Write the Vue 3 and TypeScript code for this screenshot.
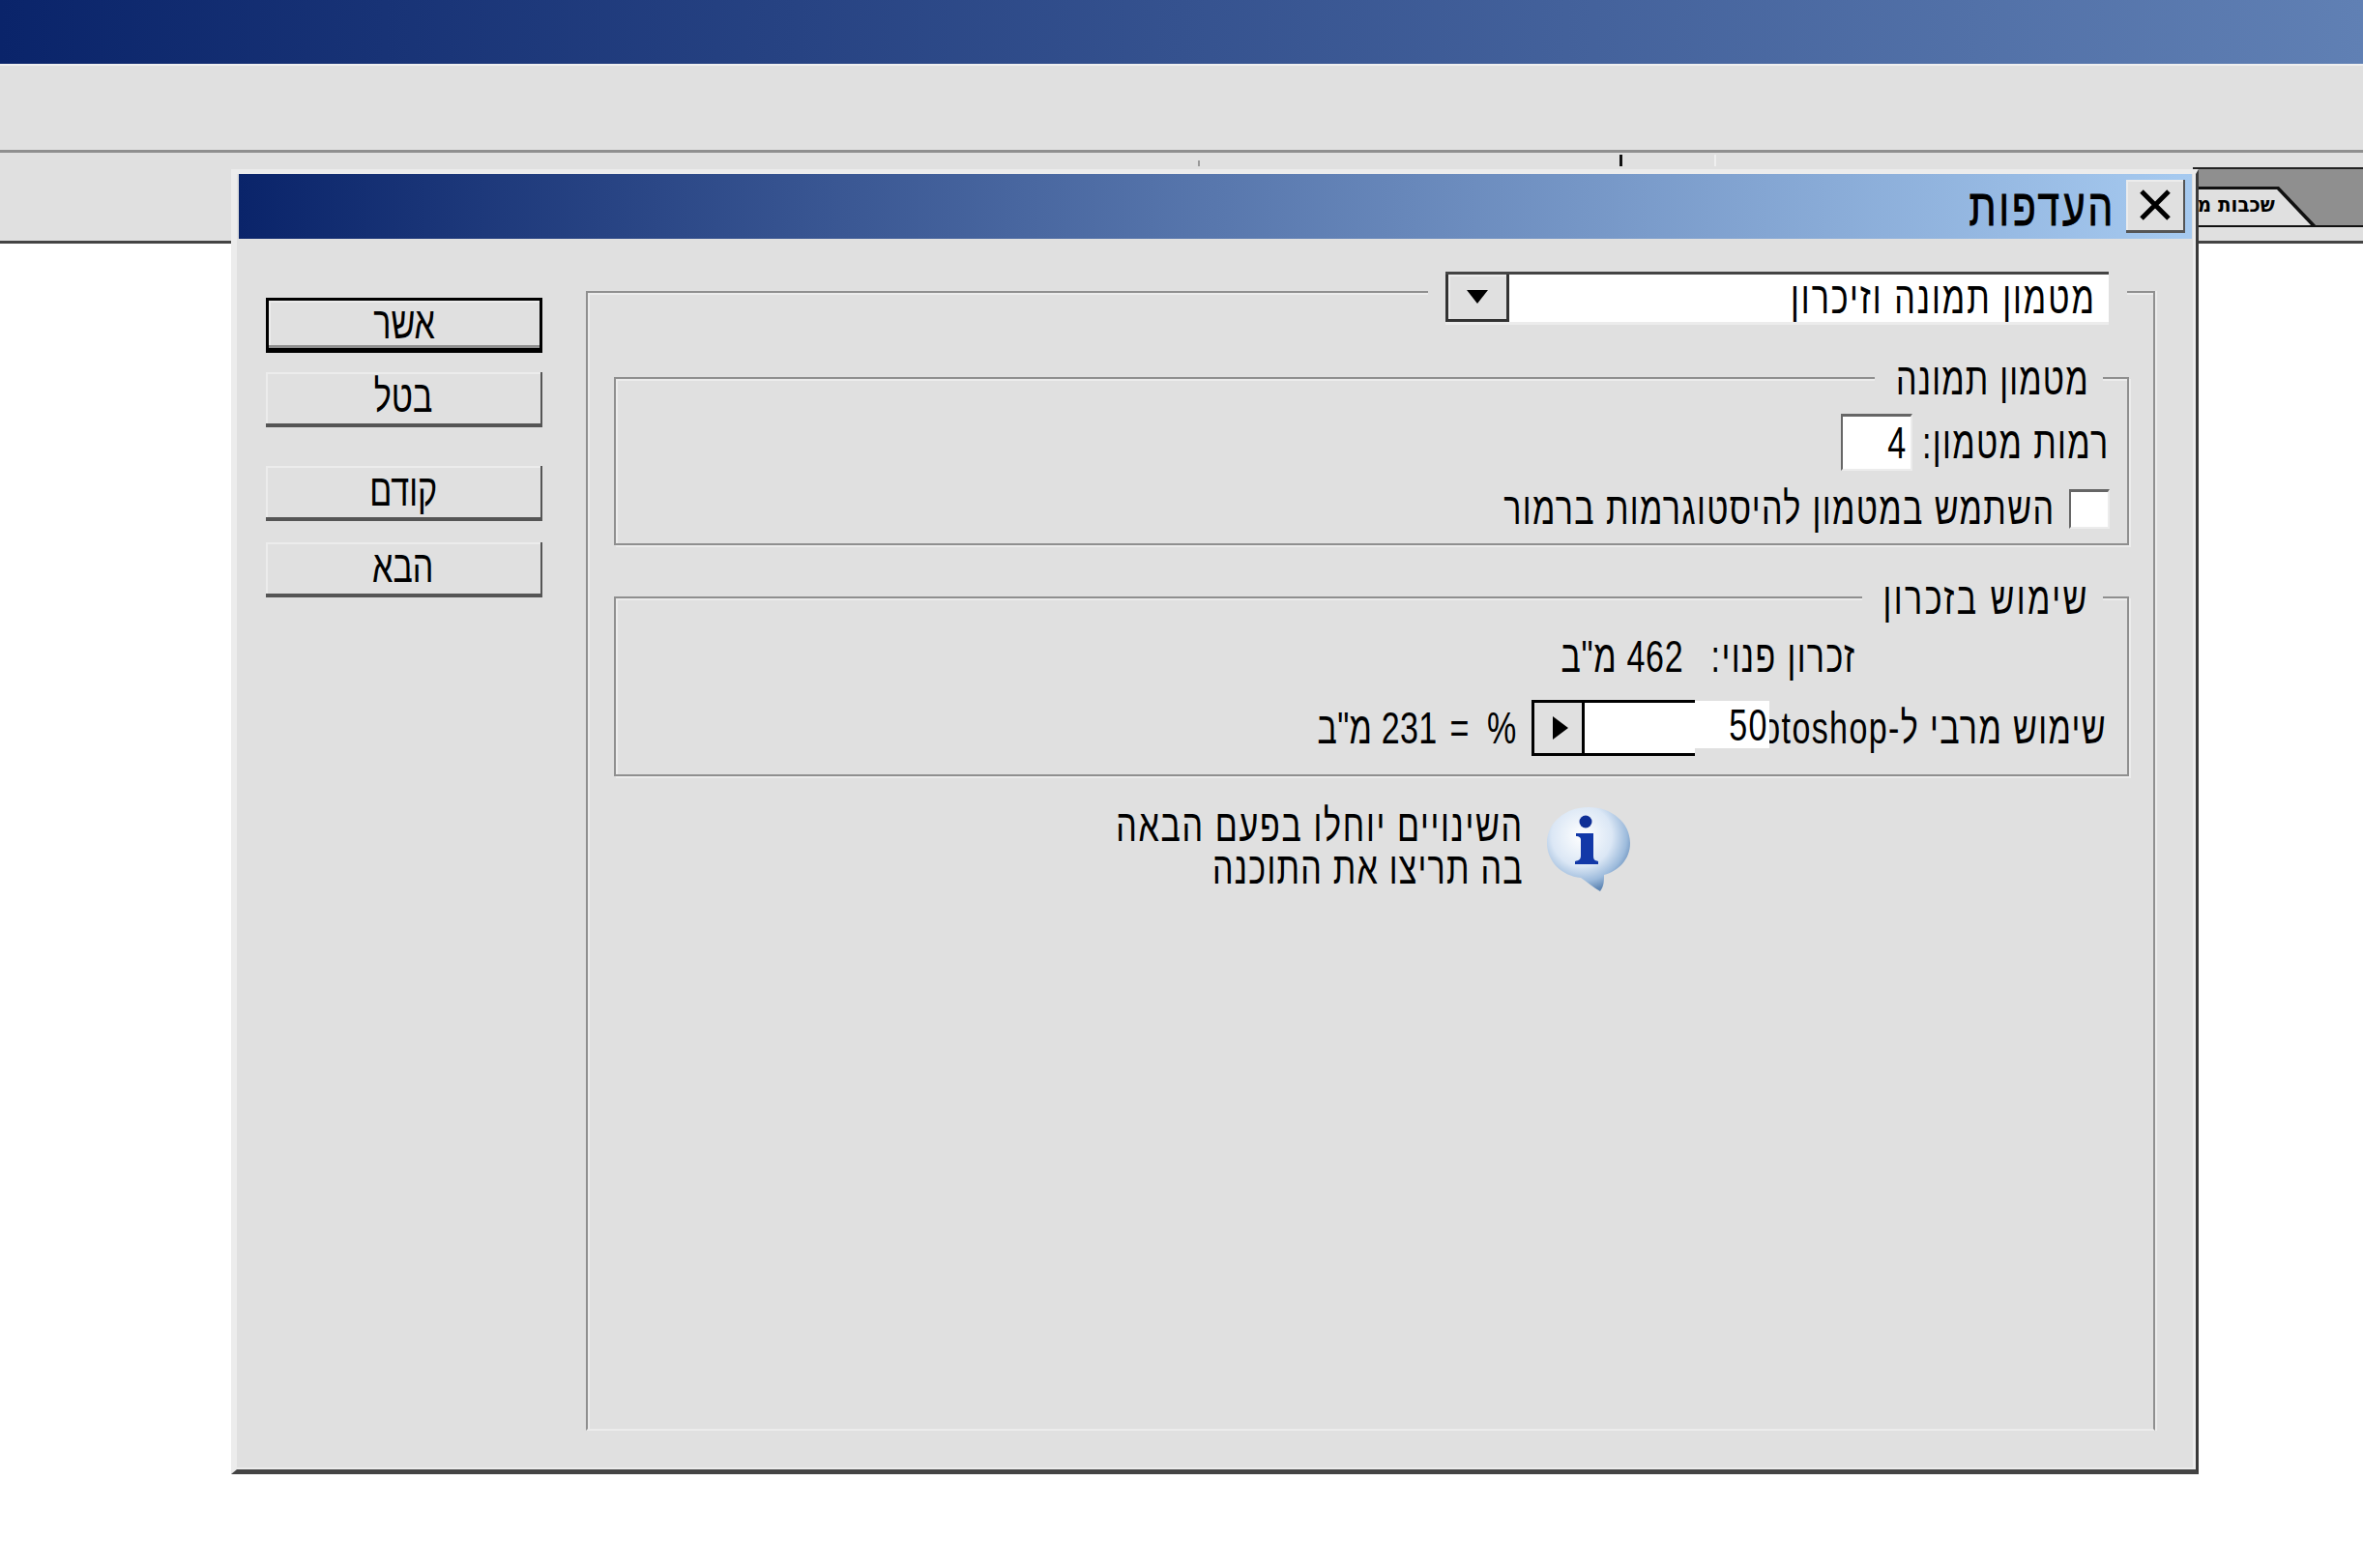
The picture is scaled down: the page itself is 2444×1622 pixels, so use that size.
<script setup lang="ts">
const actions: { label: string; cls: string }[] = [
  { label: 'אשר', cls: 'btn-ok' },
  { label: 'בטל', cls: 'btn-cancel' },
  { label: 'קודם', cls: 'btn-prev' },
  { label: 'הבא', cls: 'btn-next' },
]
</script>

<template>
  <div class="screen">
    <div class="topbar"></div>
    <div class="toolbar"></div>
    <div class="strip">
      <i class="tick tick-a"></i>
      <i class="tick tick-b"></i>
      <i class="tick tick-c"></i>
      <div class="panel">
        <div class="tabs">
          <div class="tab"><span class="tab-text">שכבות מ</span></div>
        </div>
      </div>
    </div>

    <section class="dialog">
      <header class="title" dir="rtl">
        <button class="close" aria-label="close">
          <svg width="36" height="34" viewBox="0 0 36 34">
            <path d="M4 3 L32 31 M32 3 L4 31" stroke="#000" stroke-width="5" fill="none" />
          </svg>
        </button>
        <span class="title-text"><span class="t">העדפות</span></span>
      </header>

      <div class="body">
        <div class="actions">
          <button v-for="a in actions" :key="a.label" class="btn" :class="a.cls">
            <span class="t t-c">{{ a.label }}</span>
          </button>
        </div>

        <div class="outer" dir="rtl">
          <div class="combo">
            <div class="combo-field"><span class="t">מטמון תמונה וזיכרון</span></div>
            <div class="combo-btn">
              <svg width="22" height="14" viewBox="0 0 22 14"><path d="M0 0 H22 L11 14 Z" fill="#000" /></svg>
            </div>
          </div>

          <div class="group group-cache">
            <span class="legend legend-cache"><span class="t">מטמון תמונה</span></span>
            <div class="row row-levels">
              <span class="lbl lbl-levels"><span class="t">רמות מטמון:</span></span>
              <div class="field"><span class="t">4</span></div>
            </div>
            <div class="row row-check">
              <span class="checkbox"></span>
              <span class="lbl lbl-check"><span class="t">השתמש במטמון להיסטוגרמות ברמור</span></span>
            </div>
          </div>

          <div class="group group-mem">
            <span class="legend legend-mem"><span class="t">שימוש בזכרון</span></span>
            <div class="row row-free">
              <span class="lbl lbl-free"><span class="t">זכרון פנוי:</span></span>
              <span class="lbl lbl-free-val"><span class="t">462 מ"ב</span></span>
            </div>
            <div class="row row-max">
              <span class="lbl lbl-max">
                <span class="t">שימוש מרבי ל-Photoshop</span>
                <span class="pct-input"><span class="t">50</span></span>
              </span>
              <div class="slider">
                <div class="slider-track"></div>
                <div class="slider-btn">
                  <svg width="16" height="24" viewBox="0 0 16 24"><path d="M0 0 L16 12 L0 24 Z" fill="#000" /></svg>
                </div>
              </div>
              <span class="lbl lbl-pct"><span class="t">%</span></span>
              <span class="lbl lbl-eq"><span class="t">=</span></span>
              <span class="lbl lbl-mb"><span class="t">231 מ"ב</span></span>
            </div>
          </div>

          <div class="info">
            <svg class="info-icon" width="88" height="90" viewBox="0 0 88 90">
              <defs>
                <radialGradient id="bub" cx="42%" cy="34%" r="66%">
                  <stop offset="0" stop-color="#ffffff" />
                  <stop offset="0.55" stop-color="#dbe7f5" />
                  <stop offset="0.82" stop-color="#9dbbdc" />
                  <stop offset="1" stop-color="#5f86b4" />
                </radialGradient>
              </defs>
              <path
                d="M44 2 C68 2 87 18 87 39 C87 56 75 68 60 72 C60 78 60 84 56 89 C49 85 42 79 36 75 C16 73 1 58 1 39 C1 18 20 2 44 2 Z"
                fill="url(#bub)"
              />
              <circle cx="41" cy="17" r="6.5" fill="#0f2f96" />
              <path
                d="M31 29 H49 V52 C49 56 50 57 54 58 V61 H30 V58 C34 57 36 56 36 52 V36 C36 33 34 32 31 32 Z"
                fill="#1238a8"
              />
            </svg>
            <div class="info-text">
              <div class="info-line"><span class="t">השינויים יוחלו בפעם הבאה</span></div>
              <div class="info-line info-line-2"><span class="t">בה תריצו את התוכנה</span></div>
            </div>
          </div>
        </div>
      </div>
    </section>
  </div>
</template>

<style>
html, body { margin: 0; background: #fff; }
</style>

<style scoped>
.screen {
  position: relative;
  width: 2444px;
  height: 1622px;
  overflow: hidden;
  background: #fff;
  font-family: "Liberation Sans", Arial, sans-serif;
  color: #000;
}
.topbar {
  height: 66px;
  background: linear-gradient(90deg, #0a246a, #6080b4);
}
.toolbar {
  height: 87px;
  background: #e0e0e0;
  border-top: 2px solid #efefef;
  box-sizing: content-box;
}
.strip {
  position: relative;
  height: 91px;
  background: #e0e0e0;
  border-top: 3px solid #8f8f8f;
  border-bottom: 3px solid #444;
}
.tick { position: absolute; display: block; width: 2px; }
.tick-a { left: 1239px; top: 8px; height: 6px; background: #999; }
.tick-b { left: 1675px; top: 2px; height: 12px; background: #111; width: 3px; }
.tick-c { left: 1773px; top: 2px; height: 12px; background: #efefef; }
.panel {
  position: absolute;
  left: 2268px;
  right: 0;
  top: 15px;
  bottom: -3px;
  border-top: 2px solid #222;
  border-bottom: 3px solid #444;
  box-sizing: border-box;
  background: #e0e0e0;
}
.tabs {
  position: relative;
  height: 60px;
  background: #8f8f8f;
  overflow: hidden;
  border-bottom: 2px solid #111;
  box-sizing: border-box;
}
.tab {
  position: absolute;
  left: 0;
  top: 18px;
  width: 131px;
  height: 42px;
  background: #111;
  clip-path: polygon(0 0, 89px 0, 129px 100%, 0 100%);
}
.tab::before {
  content: "";
  position: absolute;
  inset: 3px 0 0 0;
  background: #e0e0e0;
  clip-path: polygon(0 0, 87px 0, 124px 100%, 0 100%);
}
.tab-text {
  position: absolute;
  right: 46px;
  top: 5px;
  font-size: 22px;
  line-height: 28px;
  white-space: nowrap;
  direction: rtl;
  font-family: "DejaVu Sans", sans-serif;
  font-weight: bold;
  transform: scaleX(.9);
  transform-origin: right;
}

.dialog {
  position: absolute;
  left: 239px;
  top: 175px;
  width: 2035px;
  height: 1350px;
  box-sizing: border-box;
  background: #e0e0e0;
  border-left: 6px solid #ececec;
  border-top: 5px solid #ececec;
  border-right: 3px solid #3a3a3a;
  border-bottom: 5px solid #444;
  padding: 0 4px 0 2px;
  box-shadow: inset -3px -2px 0 #ececec;
}
.t {
  display: inline-block;
  font-size: 46px;
  line-height: 46px;
  white-space: nowrap;
  letter-spacing: 1.85px;
  transform: scaleX(.74);
  transform-origin: right center;
}
.t-c { transform-origin: center; letter-spacing: 0; }

.title {
  height: 67px;
  display: flex;
  align-items: center;
  background: linear-gradient(90deg, #0a246a, #a6caf0);
  padding-right: 7px;
}
.title-text { margin-right: 11px; }
.title-text .t {
  font-size: 54px;
  letter-spacing: 4px;
  -webkit-text-stroke: 1px #000;
  transform: scaleX(.75);
}
.close {
  width: 61px;
  height: 55px;
  padding: 0;
  display: flex;
  align-items: center;
  justify-content: center;
  background: #e0e0e0;
  border: 0;
  border-right: 2px solid #555;
  border-bottom: 3px solid #555;
  box-shadow: inset 2px 2px 0 #ececec;
}

.body {
  display: flex;
  padding-top: 54px;
}
.actions {
  width: 286px;
  margin-left: 28px;
  padding-top: 7px;
  flex: none;
}
.btn {
  display: flex;
  align-items: center;
  justify-content: center;
  box-sizing: border-box;
  width: 286px;
  height: 57px;
  padding: 0 0 4px;
  background: #e0e0e0;
  border: 0;
  font-family: inherit;
  color: #000;
  border-right: 2px solid #555;
  border-bottom: 4px solid #555;
  box-shadow: inset 2px 2px 0 #ececec;
}
.btn-ok {
  border: 3px solid #000;
  border-bottom-width: 5px;
  box-shadow: inset 0 -3px 0 #8f8f8f, inset 2px 2px 0 #ececec;
}
.btn-cancel { margin-top: 20px; }
.btn-prev { margin-top: 40px; }
.btn-next { margin-top: 22px; }

.outer {
  position: relative;
  margin-left: 45px;
  width: 1623px;
  height: 1179px;
  box-sizing: border-box;
  border-top: 2px solid #8f8f8f;
  border-left: 2px solid #8f8f8f;
  border-right: 2px solid #8f8f8f;
  border-bottom: 2px solid #ececec;
  box-shadow: 2px 0 0 #ececec, inset 2px 2px 0 #ececec;
  padding: 87px 25px 0 27px;
}
.combo {
  position: absolute;
  right: 46px;
  top: -22px;
  width: 686px;
  height: 55px;
  display: flex;
  background: #e0e0e0;
  box-shadow: 19px 0 0 #e0e0e0, -18px 0 0 #e0e0e0;
  border-top: 3px solid #444;
  border-bottom: 3px solid #ececec;
  box-sizing: border-box;
}
.combo-field {
  flex: 1;
  background: #fff;
  padding: 0 13px 2px 0;
  display: flex;
  align-items: center;
}
.combo-field .t { letter-spacing: 2.7px; }
.combo-btn {
  width: 66px;
  box-sizing: border-box;
  display: flex;
  align-items: center;
  justify-content: center;
  background: #e0e0e0;
  border: 3px solid #333;
  border-top-width: 0;
  box-shadow: inset 2px 2px 0 #ececec;
}
.group {
  position: relative;
  box-sizing: border-box;
  border: 2px solid #8f8f8f;
  box-shadow: 2px 2px 0 #ececec, inset 2px 2px 0 #ececec;
  padding-right: 18px;
}
.group-cache { height: 174px; padding-top: 36px; }
.group-mem { height: 186px; margin-top: 53px; padding-top: 37px; }
.legend {
  position: absolute;
  top: -22px;
  background: #e0e0e0;
  height: 44px;
  display: flex;
  align-items: center;
  justify-content: center;
  overflow: visible;
}
.legend-cache { right: 25px; width: 236px; }
.legend-mem { right: 25px; width: 249px; }
.legend .t { transform-origin: center; margin-left: 7px; letter-spacing: 1.6px; }
.legend-mem .t { letter-spacing: 3.3px; }
.row { display: flex; align-items: center; }
.lbl { display: flex; white-space: nowrap; }
.lbl-levels { width: 188px; }
.field {
  margin-right: 16px;
  width: 74px;
  height: 59px;
  box-sizing: border-box;
  background: #fff;
  border-top: 3px solid #666;
  border-left: 2px solid #666;
  border-right: 2px solid #ececec;
  border-bottom: 2px solid #ececec;
  display: flex;
  align-items: center;
  padding-right: 4px;
}
.row-check { margin-top: 16px; }
.checkbox {
  width: 42px;
  height: 41px;
  box-sizing: border-box;
  background: #fff;
  border-top: 3px solid #666;
  border-left: 2px solid #666;
  border-right: 2px solid #ececec;
  border-bottom: 2px solid #ececec;
  margin-left: 15px;
}
.row-free { padding-right: 263px; }
.lbl-free { width: 152px; margin-left: 26px; }
.lbl-free-val .t { letter-spacing: .9px; }
.row-max { margin-top: 22px; }
.lbl-max { position: relative; width: 426px; margin-right: 3px; }
.pct-input {
  position: absolute;
  left: 0;
  top: -5px;
  width: 77px;
  height: 49px;
  background: #fff;
  display: flex;
  align-items: center;
  padding-right: 1px;
  box-sizing: border-box;
  justify-content: flex-start;
}
.slider {
  position: relative;
  width: 169px;
  height: 58px;
  box-sizing: border-box;
  border-top: 3px solid #000;
  border-bottom: 3px solid #000;
  background: #fff;
  direction: ltr;
}
.slider-btn {
  position: absolute;
  left: 0;
  top: 0;
  bottom: 0;
  width: 55px;
  box-sizing: border-box;
  border-left: 3px solid #000;
  border-right: 3px solid #000;
  background: #e0e0e0;
  display: flex;
  align-items: center;
  padding-left: 19px;
}
.lbl-pct { margin-right: 14px; width: 28px; }
.lbl-eq { margin-right: 21px; width: 16px; }
.lbl-mb { margin-right: 19px; width: 120px; }
.lbl-mb .t { letter-spacing: .35px; }

.info {
  display: flex;
  margin-top: 30px;
  padding-right: 515px;
}
.info-text { margin-right: 23px; margin-top: -1px; }
.info-line { height: 44px; display: flex; align-items: center; }
.info-line .t { letter-spacing: 2.25px; }
.info-line-2 .t { letter-spacing: 1.65px; }
</style>
